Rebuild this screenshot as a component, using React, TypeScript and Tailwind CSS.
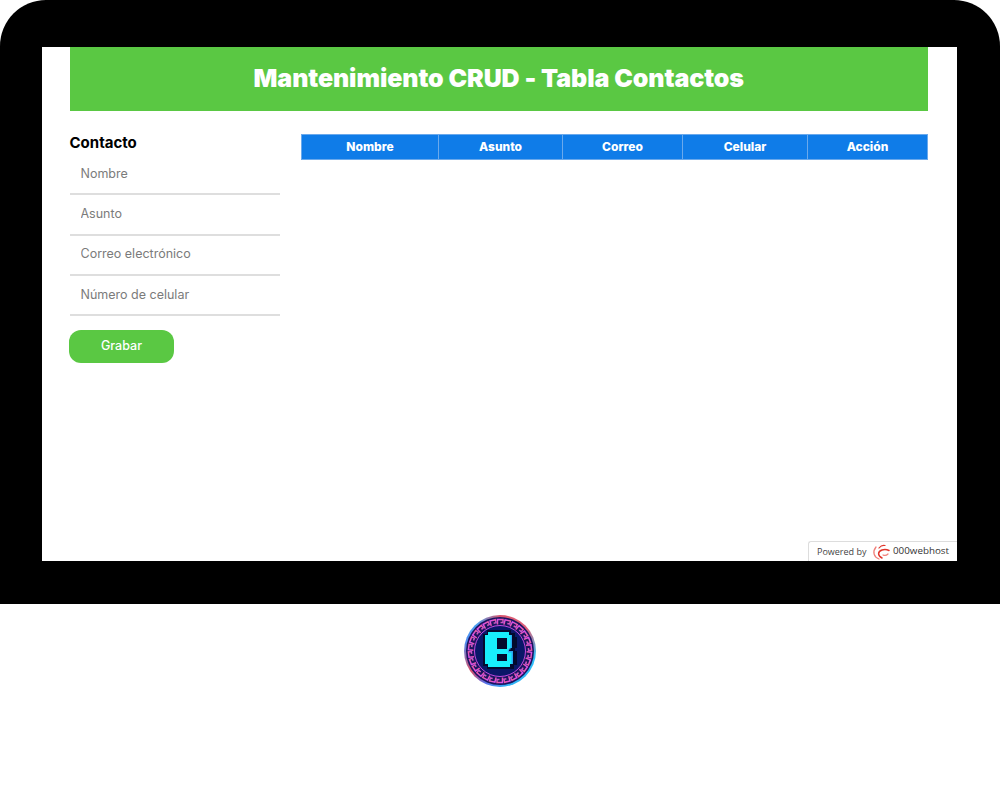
import React from "react";

const fields = ["Nombre", "Asunto", "Correo electrónico", "Número de celular"];
const columns = [
  { label: "Nombre", width: "w-[137px]" },
  { label: "Asunto", width: "w-[124px]" },
  { label: "Correo", width: "w-[120px]" },
  { label: "Celular", width: "w-[125px]" },
  { label: "Acción", width: "w-[120px]" },
];
const keys = Array.from({ length: 26 }, (_, i) => (i * 360) / 26);

const Logo = () => (
  <div className="size-[72px] rounded-full bg-[conic-gradient(#d8566e_0deg,#e0607a_50deg,#2fc0f8_100deg,#2fb0f5_170deg,#5a6fe8_205deg,#d8506a_235deg,#4f8cf0_285deg,#4aa0f0_320deg,#d8566e_360deg)]">
    <svg width="72" height="72" viewBox="0 0 72 72" className="block">
      <defs>
        <linearGradient id="band" x1="0" y1="0" x2="1" y2="1">
          <stop offset="0" stopColor="#d850f0" />
          <stop offset="0.5" stopColor="#ea58a4" />
          <stop offset="1" stopColor="#9a54f0" />
        </linearGradient>
      </defs>
      <circle cx="36" cy="36" r="34" fill="#1a1460" />
      {keys.map((deg) => (
        <path
          key={deg}
          d="M33.500 9.500 V4.500 H39 V7.500 H36.500"
          transform={`rotate(${deg} 36 36)`}
          fill="none"
          stroke="url(#band)"
          strokeWidth="1.500"
        />
      ))}
      <circle cx="36" cy="36" r="25.500" fill="#0a1768" stroke="#c04ae0" strokeWidth="1" />
      <path
        d="M23 15 H47 V18 H51 V22 H53 V33 H51 V36 H53 V50 H50 V54 H23 V51 H19 V19 H23 Z"
        fill="#030a2e"
      />
      <path
        d="M24 17 H45 V20 H48 V33 H45 V36 H49 V49 H46 V52 H24 V49 H21 V20 H24 Z"
        fill="#18eefc"
      />
      <path d="M46.500 20 H48 V33 H45 V36 H49 V49 H47.500 V37.500 H44 V34.500 H46.500 Z" fill="#2aa8f4" />
      <path d="M33 23 H43 V34 H33 Z M33 39 H43 V46 H33 Z" fill="#030a2e" />
    </svg>
  </div>
);

const Swirl = () => (
  <svg width="18" height="16" viewBox="0 0 18 16" fill="none" stroke="#e0352b" strokeLinecap="round">
    <path d="M7 15 C2 13 0 8 4 3" strokeWidth="1.300" stroke="#f0807a" />
    <path d="M10 14 C6 12 5 8 10 6 C13 5 15 5.500 17 6.500" strokeWidth="1.500" />
    <path d="M7 4 C9 1.500 11 1 13 1.500" strokeWidth="1.200" />
    <path d="M11 11 C13 12 14.500 11.500 16 10" strokeWidth="1.200" stroke="#f0807a" />
  </svg>
);

const App = () => {
  return (
    <div className="h-[803px] w-[1000px] bg-white font-['Inter',sans-serif]">
      <div className="rounded-t-[46px] bg-black pt-[47px] pr-[43px] pb-[43px] pl-[42px]">
        <div className="relative h-[514px] bg-white">
          <div className="mr-[29px] ml-[27.500px] flex h-16 items-center justify-center bg-[#5ac843]">
            <h1 className="text-[25px] font-black tracking-[-0.1px] text-white">
              Mantenimiento CRUD - Tabla Contactos
            </h1>
          </div>

          <div className="mr-[29px] ml-[27.500px] flex gap-[21px]">
            <div className="w-[210.500px] shrink-0 pt-[22px]">
              <h2 className="mb-0.5 text-[15px] leading-5 font-bold text-black">Contacto</h2>
              {fields.map((field) => (
                <input
                  key={field}
                  placeholder={field}
                  className="block h-[40.300px] w-full border-b-2 border-[#dedede] pb-0.5 pl-[11px] text-[12.500px] outline-none placeholder:text-[#7b7b7b]"
                />
              ))}
              <button className="mt-[14px] -ml-[0.500px] h-[33px] w-[105px] rounded-xl bg-[#5ac843] text-[12.500px] font-medium text-white">
                Grabar
              </button>
            </div>

            <div className="pt-[23px]">
              <table className="w-[626px] table-fixed border-collapse">
                <thead>
                  <tr>
                    {columns.map((col) => (
                      <th
                        key={col.label}
                        className={`${col.width} h-[25px] border border-[#6aa9ec] bg-[#0f7ce8] pb-px text-center text-xs font-extrabold text-white`}
                      >
                        {col.label}
                      </th>
                    ))}
                  </tr>
                </thead>
              </table>
            </div>
          </div>

          <div className="absolute right-0 bottom-0 flex h-5 w-[149px] items-center rounded-tl-[3px] border-t border-l border-[#dddddd] bg-white pl-2 font-['Open_Sans',sans-serif]">
            <span className="w-[55px] text-[9px] text-[#444444]">Powered by</span>
            <Swirl />
            <span className="ml-[3px] text-[9.800px] text-[#333333]">000webhost</span>
          </div>
        </div>
      </div>

      <div className="flex justify-center pt-[11px]">
        <Logo />
      </div>
    </div>
  );
};

export default App;
